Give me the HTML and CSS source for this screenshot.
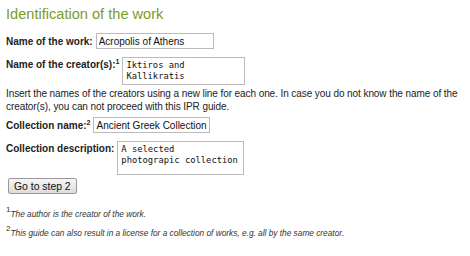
FILE: index.html
```html
<!DOCTYPE html>
<html>
<head>
    <title>Identification of the work</title>
    <link rel="stylesheet" href="styles.css">
</head>
<body>
    <h1>Identification of the work</h1>

    <form class="ipr-form">
        <div class="row">
            <label class="field-label">Name of the work:</label>
            <input class="text-input work-name" type="text" value="Acropolis of Athens">
        </div>

        <div class="row row-top row-tight">
            <label class="field-label">Name of the creator(s):<sup>1</sup></label>
            <textarea class="text-area creators" rows="2">Iktiros and
Kallikratis</textarea>
        </div>
        <p class="hint">Insert the names of the creators using a new line for each one. In case you do not know the name of the creator(s), you can not proceed with this IPR guide.</p>

        <div class="row">
            <label class="field-label">Collection name:<sup>2</sup></label>
            <input class="text-input collection-name" type="text" value="Ancient Greek Collection">
        </div>

        <div class="row row-top row-tight">
            <label class="field-label">Collection description:</label>
            <textarea class="text-area description" rows="2">A selected
photograpic collection</textarea>
        </div>

        <button class="step-btn" type="button">Go to step 2</button>
    </form>

    <!-- Footnotes -->
    <div class="notes">
        <p><sup>1</sup><em>The author is the creator of the work.</em></p>
        <p><sup>2</sup><em>This guide can also result in a license for a collection of works, e.g. all by the same creator.</em></p>
    </div>
</body>
</html>
```

FILE: styles.css
```css
body { font-family: "Liberation Sans", Arial, sans-serif; font-size: 10px; color: #222; margin: 5px 6px; background: #fff; }
h1 { font-size: 14.6px; font-weight: normal; color: #7d9b1e; margin: 0 0 10px 0; line-height: 18px; }
.row { display: flex; align-items: center; gap: 3px; margin-bottom: 8px; }
.row-top { align-items: flex-start; }
.row-tight { margin-bottom: 3px; }
.row-top .field-label { padding-top: 2px; }
.field-label { font-weight: bold; font-size: 10px; }
.field-label sup { font-size: 7px; line-height: 0; }
.text-input { font-family: "Liberation Sans", Arial, sans-serif; font-size: 10px; color: #111; border: 1px solid #bbb; padding: 1px 2px; height: 16px; box-sizing: border-box; margin: 0; }
.work-name { width: 118px; }
.collection-name { width: 117px; }
.text-area { font-family: "DejaVu Sans Mono", "Liberation Mono", monospace; font-size: 8.8px; line-height: 11px; color: #111; border: 1px solid #bbb; padding: 2px 3px; resize: none; overflow: hidden; margin: 0; box-sizing: border-box; }
.creators { width: 123px; height: 28px; }
.description { width: 127px; height: 34px; }
.hint { margin: -1px 0 4px 0; line-height: 13px; letter-spacing: -0.08px; }
.step-btn { font-family: "Liberation Sans", Arial, sans-serif; font-size: 10.4px; color: #111; background: linear-gradient(#f6f6f6, #dcdcdc); border: 1px solid #999; border-radius: 2px; padding: 1px 5px; height: 16px; margin: 0 0 0 2px; }
.notes { margin-top: 14px; font-size: 8.3px; color: #333; }
.notes p { margin: 0 0 6px 0; line-height: 13px; }
.notes sup { font-size: 8px; vertical-align: 5px; line-height: 0; }
```
